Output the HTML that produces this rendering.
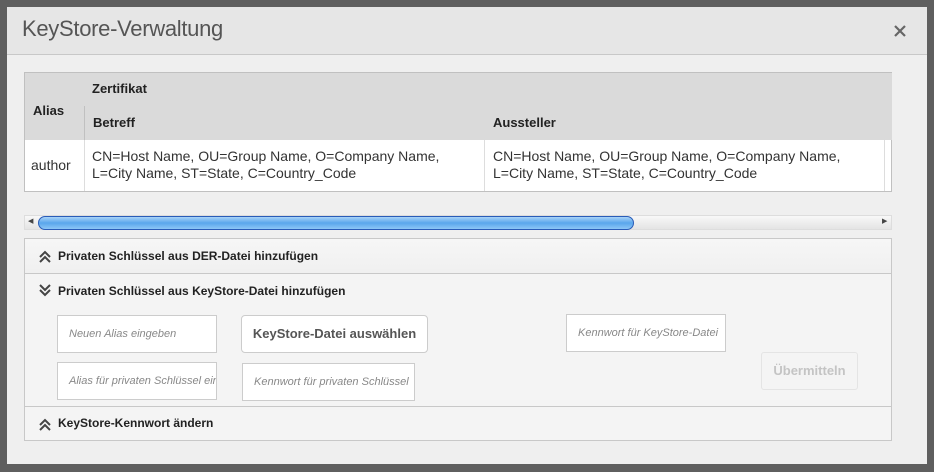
<!DOCTYPE html>
<html><head><meta charset="utf-8"><style>
*{box-sizing:border-box;margin:0;padding:0}
body{width:934px;height:472px;background:#5f5f5f;font-family:"Liberation Sans",sans-serif;position:relative;overflow:hidden}
.a{position:absolute}
.dlg{left:7px;top:7px;width:920px;height:457px;background:#efefef}
.hdr{left:7px;top:7px;width:920px;height:48px;background:#e6e6e6;border-bottom:1px solid #c8c8c8}
.title{left:22px;top:16px;font-size:22px;color:#555;letter-spacing:-0.3px}
.th{background:#dadada;font-weight:bold;font-size:13px;color:#222;border-color:#c0c0c0;border-style:solid}
.td{background:#fff;font-size:14px;color:#333;line-height:17px}
.acc{left:24px;top:238px;width:868px;height:203px;border:1px solid #c8c8c8;background:#f4f4f4}
.row{position:absolute;left:0;width:866px;font-size:12px;font-weight:bold;color:#222}
.inp{position:absolute;background:#fff;border:1px solid #ccc;font-size:11px;font-style:italic;color:#888;padding-left:11px;line-height:37px;overflow:hidden;white-space:nowrap}
.chev{position:absolute;left:14px}
.lbl{position:absolute;left:33px}
</style></head><body>
<div class="a dlg"></div>
<div class="a hdr"></div>
<div class="a title">KeyStore-Verwaltung</div>
<svg class="a" style="left:893px;top:24px" width="14" height="14" viewBox="0 0 14 14"><path d="M2 2L12 12M12 2L2 12" stroke="#666" stroke-width="2.2"/></svg>

<div class="a th" style="left:24px;top:72px;width:61px;height:69px;border-width:1px 1px 0 1px;padding:30px 0 0 8px">Alias</div>
<div class="a th" style="left:84px;top:72px;width:808px;height:35px;border-width:1px 0 1px 0;padding:8px 0 0 8px">Zertifikat</div>
<div class="a th" style="left:84px;top:106px;width:401px;height:35px;border-width:0 1px 1px 1px;padding:9px 0 0 8px">Betreff</div>
<div class="a th" style="left:484px;top:106px;width:401px;height:35px;border-width:0 1px 1px 0;padding:9px 0 0 9px">Aussteller</div>
<div class="a th" style="left:884px;top:106px;width:8px;height:35px;border-width:0 0 1px 0"></div>
<div class="a td" style="left:24px;top:140px;width:868px;height:52px;border:1px solid #c0c0c0;border-top:0"></div>
<div class="a td" style="left:31px;top:157px">author</div>
<div class="a" style="left:84px;top:140px;width:1px;height:51px;background:#ddd"></div>
<div class="a" style="left:484px;top:140px;width:1px;height:51px;background:#ddd"></div>
<div class="a" style="left:884px;top:140px;width:1px;height:51px;background:#ddd"></div>
<div class="a td" style="left:92px;top:148px">CN=Host Name, OU=Group Name, O=Company Name,<br>L=City Name, ST=State, C=Country_Code</div>
<div class="a td" style="left:493px;top:148px">CN=Host Name, OU=Group Name, O=Company Name,<br>L=City Name, ST=State, C=Country_Code</div>

<div class="a" style="left:24px;top:215px;width:868px;height:15px;background:linear-gradient(#f8f8f8,#e4e4e4);border:1px solid #ddd"></div>
<div class="a" style="left:28px;top:217px;font-size:7px;color:#444">◀</div>
<div class="a" style="left:882px;top:217px;font-size:7px;color:#444">▶</div>
<div class="a" style="left:38px;top:216px;width:596px;height:14px;border-radius:7px;border:1px solid #2a5cb8;background:linear-gradient(#a9d3f8,#5aa6ec 50%,#8cc6f6)"></div>

<div class="a acc">
<div class="row" style="top:0;height:35px;border-bottom:1px solid #c8c8c8;background:linear-gradient(#f6f6f6,#f0f0f0)">
<svg class="chev" style="top:11px" width="12" height="13" viewBox="0 0 12 13"><path d="M1 7L6 2L11 7M1 12L6 7L11 12" fill="none" stroke="#444" stroke-width="2"/></svg>
<span class="lbl" style="top:10px">Privaten Schlüssel aus DER-Datei hinzufügen</span></div>
<div class="row" style="top:35px;height:133px;border-bottom:1px solid #c8c8c8">
<svg class="chev" style="top:10px" width="12" height="13" viewBox="0 0 12 13"><path d="M1 1L6 6L11 1M1 6L6 11L11 6" fill="none" stroke="#444" stroke-width="2"/></svg>
<span class="lbl" style="top:10px">Privaten Schlüssel aus KeyStore-Datei hinzufügen</span></div>
<div class="row" style="top:168px;height:34px">
<svg class="chev" style="top:11px" width="12" height="13" viewBox="0 0 12 13"><path d="M1 7L6 2L11 7M1 12L6 7L11 12" fill="none" stroke="#444" stroke-width="2"/></svg>
<span class="lbl" style="top:9px">KeyStore-Kennwort ändern</span></div>
</div>
<div class="inp" style="left:57px;top:315px;width:160px;height:38px">Neuen Alias eingeben</div>
<div class="a" style="left:241px;top:315px;width:187px;height:38px;background:#fff;border:1px solid #ccc;border-radius:4px;font-size:13px;font-weight:bold;color:#555;text-align:center;line-height:36px">KeyStore-Datei auswählen</div>
<div class="inp" style="left:57px;top:362px;width:160px;height:38px">Alias für privaten Schlüssel eingeben</div>
<div class="inp" style="left:242px;top:363px;width:173px;height:38px">Kennwort für privaten Schlüssel</div>
<div class="inp" style="left:566px;top:314px;width:160px;height:38px">Kennwort für KeyStore-Datei</div>
<div class="a" style="left:761px;top:352px;width:97px;height:38px;border:1px solid #e4e4e4;border-radius:3px;font-size:13px;font-weight:bold;color:#c4c4c4;text-align:center;line-height:36px">Übermitteln</div>
</body></html>
